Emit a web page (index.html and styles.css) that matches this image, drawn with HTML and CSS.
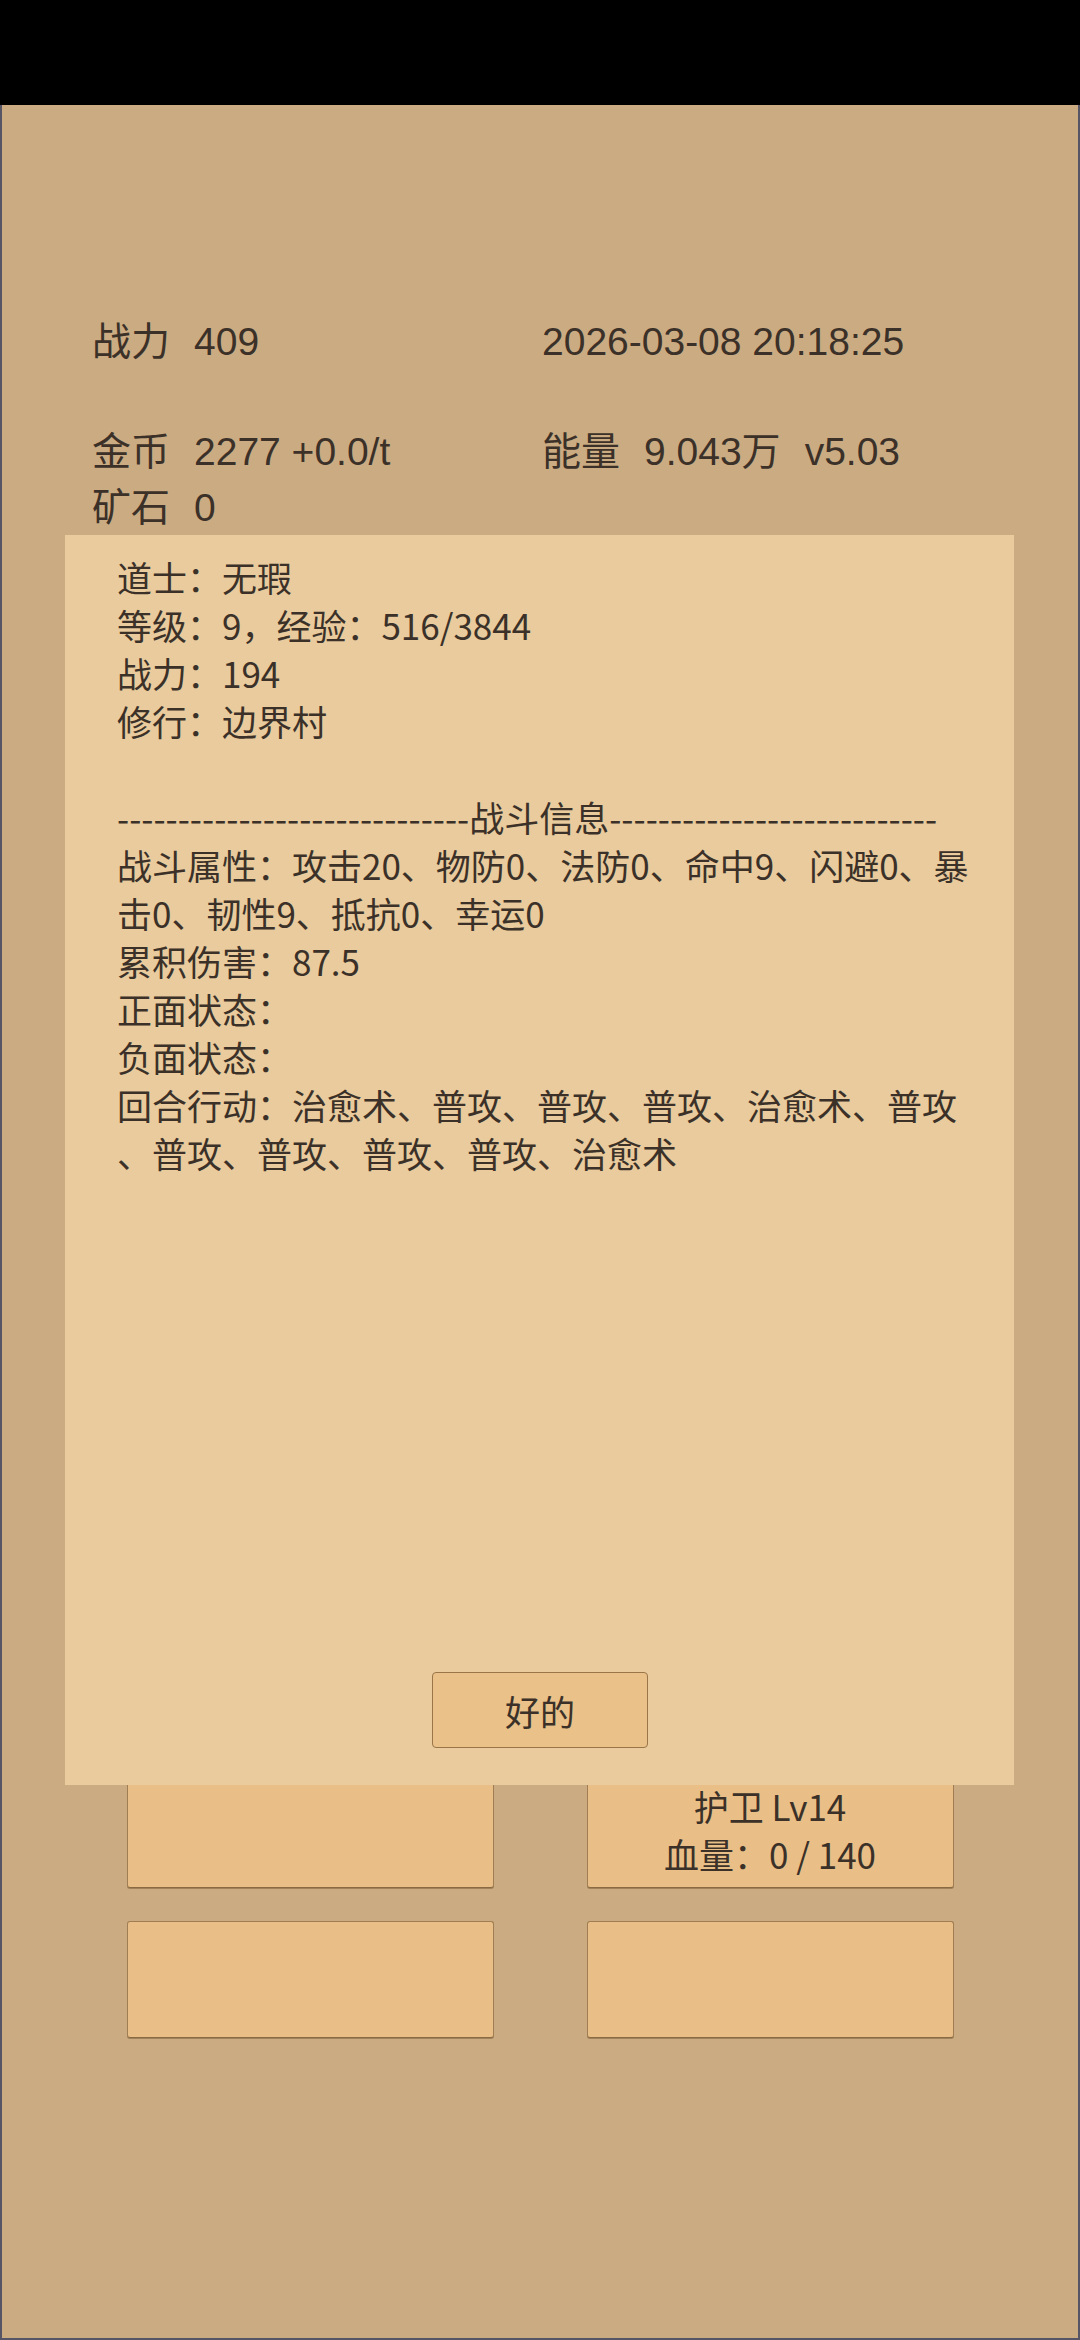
FILE: index.html
```html
<!DOCTYPE html>
<html lang="zh">
<head>
  <meta charset="UTF-8" />
  <title>战斗信息</title>
  <link rel="stylesheet" href="styles.css">
</head>
<body>
  <div class="status-bar"></div>
  <div class="screen">
    <div class="stats">
      <div class="stat"><span class="label">战力</span><span>409</span></div>
      <div class="stat"><span>2026-03-08 20:18:25</span></div>
      <div class="stat row-gap"><span class="label">金币</span><span>2277 +0.0/t</span></div>
      <div class="stat row-gap"><span class="label">能量</span><span class="label">9.043万</span><span>v5.03</span></div>
      <div class="stat last"><span class="label">矿石</span><span>0</span></div>
    </div>

    <div class="party">
      <div class="slot"></div>
      <div class="slot">护卫 Lv14<br>血量：0 / 140</div>
      <div class="slot"></div>
      <div class="slot"></div>
    </div>

    <div class="dialog">
      <div class="info">道士：无瑕
等级：9，经验：516/3844
战力：194
修行：边界村

-----------------------------战斗信息---------------------------
战斗属性：攻击20、物防0、法防0、命中9、闪避0、暴
击0、韧性9、抵抗0、幸运0
累积伤害：87.5
正面状态：
负面状态：
回合行动：治愈术、普攻、普攻、普攻、治愈术、普攻
、普攻、普攻、普攻、普攻、治愈术</div>
      <button class="ok-btn">好的</button>
    </div>
  </div>
</body>
</html>
```

FILE: styles.css
```css
body {
  margin: 0;
  width: 1080px;
  height: 2340px;
  background: #000;
  color: #3b3128;
  font-family: "Noto Sans CJK SC", sans-serif;
}
.status-bar {
  height: 105px;
  background: #000;
}
.screen {
  position: relative;
  box-sizing: border-box;
  height: 2235px;
  background: #cbab82;
  border: 2px solid #565566;
  border-top: none;
}
.stats {
  display: grid;
  grid-template-columns: 450px 1fr;
  padding: 209px 0 0 90px;
  font-family: "Liberation Sans", "Noto Sans CJK SC", sans-serif;
  font-size: 39px;
  line-height: 56px;
}
.stat {
  display: flex;
  white-space: nowrap;
}
.stat .label {
  margin-right: 24px;
}
.stat.row-gap {
  margin-top: 54px;
}
.stat.last {
  margin-top: 0;
}
.party {
  display: grid;
  grid-template-columns: 367px 367px;
  column-gap: 93px;
  row-gap: 33px;
  justify-content: center;
  margin-top: 1235px;
}
.slot {
  box-sizing: border-box;
  height: 117px;
  background: #e9bf87;
  border: 1px solid #a07d52;
  border-bottom-color: #8a6a42;
  border-radius: 3px;
  box-shadow: 0 1px 0 rgba(120, 90, 50, 0.5);
  display: flex;
  align-items: center;
  justify-content: center;
  text-align: center;
  font-size: 35px;
  line-height: 48px;
}
.dialog {
  position: absolute;
  top: 430px;
  left: 63px;
  box-sizing: border-box;
  width: 949px;
  height: 1250px;
  padding: 18px 20px 37px 52px;
  background: #e9cb9e;
  display: flex;
  flex-direction: column;
  align-items: flex-start;
}
.info {
  white-space: pre;
  font-size: 35px;
  line-height: 48px;
}
.ok-btn {
  margin: auto 0 0 315px;
  width: 216px;
  height: 76px;
  background: #e9c189;
  border: 1px solid #9a7549;
  border-radius: 4px;
  color: #3b3128;
  font-family: "Noto Sans CJK SC", sans-serif;
  font-size: 35px;
  padding: 0;
}
```
